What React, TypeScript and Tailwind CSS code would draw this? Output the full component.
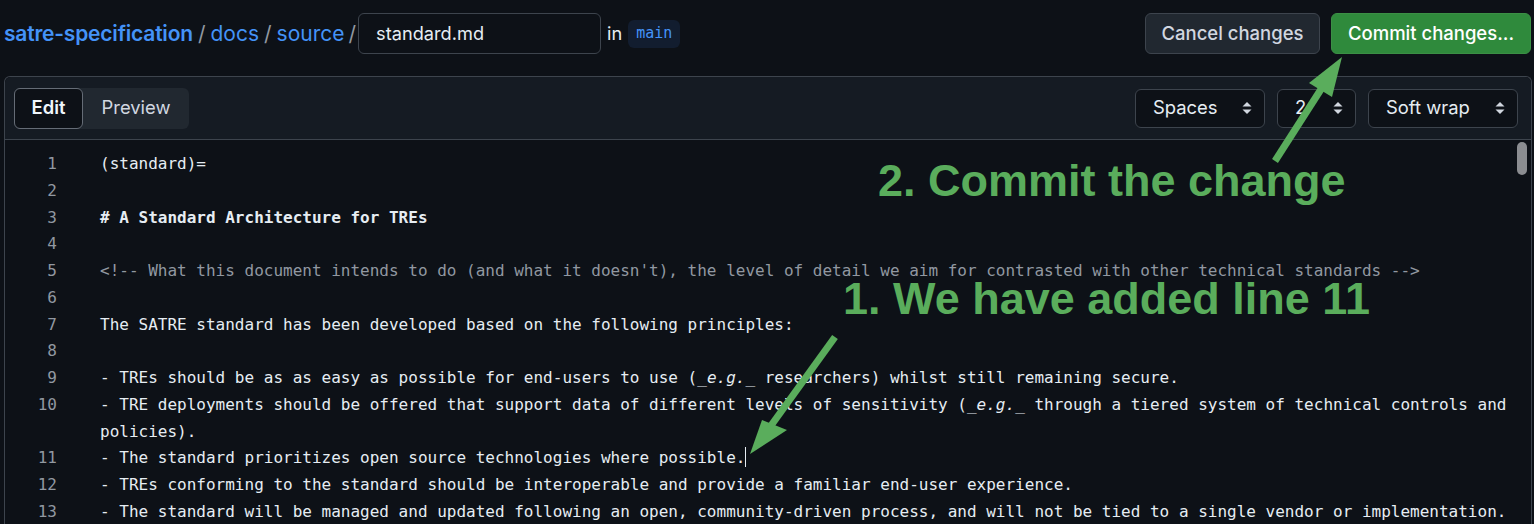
import React from "react";

type Seg = { t: string; i?: boolean };
type Line = { n: number; segs: Seg[]; bold?: boolean; muted?: boolean; cursor?: boolean };

const eg = (before: string, after: string): Seg[] => [
  { t: before + "_" },
  { t: "e.g.", i: true },
  { t: "_" + after },
];

const lines: Line[] = [
  { n: 1, segs: [{ t: "(standard)=" }] },
  { n: 2, segs: [] },
  { n: 3, segs: [{ t: "# A Standard Architecture for TREs" }], bold: true },
  { n: 4, segs: [] },
  {
    n: 5,
    segs: [
      {
        t: "<!-- What this document intends to do (and what it doesn't), the level of detail we aim for contrasted with other technical standards -->",
      },
    ],
    muted: true,
  },
  { n: 6, segs: [] },
  { n: 7, segs: [{ t: "The SATRE standard has been developed based on the following principles:" }] },
  { n: 8, segs: [] },
  {
    n: 9,
    segs: eg(
      "- TREs should be as as easy as possible for end-users to use (",
      " researchers) whilst still remaining secure."
    ),
  },
  {
    n: 10,
    segs: eg(
      "- TRE deployments should be offered that support data of different levels of sensitivity (",
      " through a tiered system of technical controls and policies)."
    ),
  },
  { n: 11, segs: [{ t: "- The standard prioritizes open source technologies where possible." }], cursor: true },
  {
    n: 12,
    segs: [{ t: "- TREs conforming to the standard should be interoperable and provide a familiar end-user experience." }],
  },
  {
    n: 13,
    segs: [
      {
        t: "- The standard will be managed and updated following an open, community-driven process, and will not be tied to a single vendor or implementation.",
      },
    ],
  },
  { n: 14, segs: [] },
];

function UpDown() {
  return (
    <svg width="10" height="14" viewBox="0 0 10 14" className="shrink-0">
      <path d="M5 1 L9.5 5.5 H0.5 Z" fill="#d1d7e0" />
      <path d="M5 13 L9.5 8.5 H0.5 Z" fill="#d1d7e0" />
    </svg>
  );
}

function Select({ label, w }: { label: string; w: string }) {
  return (
    <div
      className={`${w} h-[39px] flex items-center justify-between pl-[17px] pr-[12px] rounded-md border border-[#3d444d] bg-[#0d1117] text-[18.4px] text-[#e6edf3]`}
    >
      <span>{label}</span>
      <UpDown />
    </div>
  );
}

export default function App() {
  return (
    <div className="relative w-[1534px] h-[524px] overflow-hidden bg-[#0d1117] font-['Inter','Liberation_Sans',sans-serif]">
      {/* top bar */}
      <div className="flex items-center justify-between h-[67px] pl-[4px] pr-[3px]">
        <div className="flex items-center">
          <span className="text-[21px] font-semibold text-[#4493f8] tracking-[-0.2px]">satre-specification</span>
          <span className="text-[21px] text-[#9198a1] mx-[5px]">/</span>
          <span className="text-[21px] text-[#4493f8]">docs</span>
          <span className="text-[21px] text-[#9198a1] mx-[5px]">/</span>
          <span className="text-[21px] text-[#4493f8]">source</span>
          <span className="text-[21px] text-[#9198a1] ml-[4px] mr-[2px]">/</span>
          <div className="w-[243px] h-[41px] flex items-center pl-[17px] rounded-md border border-[#3d444d] bg-[#0d1117] text-[18.2px] text-[#e6edf3]">
            standard.md
          </div>
          <span className="ml-[6px] text-[18.2px] text-[#e6edf3]">in</span>
          <span className="ml-[6px] h-[28px] px-[8px] flex items-center rounded-md bg-[#121d2f] text-[#4493f8] text-[15px] font-['DejaVu_Sans_Mono',monospace]">
            main
          </span>
        </div>
        <div className="flex items-center gap-[11px]">
          <button className="h-[41px] w-[175px] rounded-md border border-[#3d444d] bg-[#212830] text-[#d1d7e0] text-[18.5px] font-medium">
            Cancel changes
          </button>
          <button className="h-[41px] w-[200px] rounded-md border border-[#3b8f45] bg-[#2f8a3c] text-white text-[18.5px] font-medium">
            Commit changes...
          </button>
        </div>
      </div>

      {/* editor */}
      <div className="mt-[9px] ml-[4px] mr-[2px] rounded-t-md border border-[#3d444d] border-b-0">
        <div className="h-[63px] flex items-center justify-between pl-[9px] pr-[13px] bg-[#151b23] border-b border-[#3d444d] rounded-t-md">
          <div className="flex h-[41px] rounded-md bg-[#212830]">
            <div className="w-[69px] flex items-center justify-center rounded-md border border-[#656c76] bg-[#0d1117] text-[18.4px] font-semibold text-[#f0f6fc]">
              Edit
            </div>
            <div className="w-[106px] flex items-center justify-center text-[18.4px] text-[#d1d7e0]">Preview</div>
          </div>
          <div className="flex items-center gap-[12px]">
            <Select label="Spaces" w="w-[130px]" />
            <Select label="2" w="w-[79px]" />
            <Select label="Soft wrap" w="w-[150px]" />
          </div>
        </div>

        <div className="relative pt-[11px] pr-[16px] font-['DejaVu_Sans_Mono','Liberation_Mono',monospace] text-[16px] leading-[26.77px]">
          {lines.map((l) => (
            <div key={l.n} className="flex">
              <div className="w-[52px] shrink-0 text-right text-[#9198a1]">{l.n}</div>
              <div
                className={`ml-[43px] flex-1 whitespace-pre-wrap break-words ${
                  l.muted ? "text-[#9198a1]" : "text-[#e6edf3]"
                } ${l.bold ? "font-bold" : ""}`}
              >
                {l.segs.map((s, i) =>
                  s.i ? (
                    <em key={i} className="italic">
                      {s.t}
                    </em>
                  ) : (
                    <span key={i}>{s.t}</span>
                  )
                )}
                {l.cursor && <span className="inline-block w-0 h-[20px] align-[-4px] border-l border-[#e6edf3]" />}
                {l.segs.length === 0 && " "}
              </div>
            </div>
          ))}
          {/* scrollbar */}
          <div className="absolute right-[4px] top-[2px] w-[10px] h-[33px] rounded-full bg-[#8b8d91]" />
        </div>
      </div>

      {/* annotations */}
      <svg className="absolute inset-0 pointer-events-none" width="1534" height="524" viewBox="0 0 1534 524">
        <line x1="1275" y1="161" x2="1325" y2="83" stroke="#5aad5c" strokeWidth="7" />
        <path d="M1342 57 L1309 83 L1332 97 Z" fill="#5aad5c" />
        <line x1="835" y1="337" x2="770" y2="427" stroke="#5aad5c" strokeWidth="7" />
        <path d="M750 454 L762 420 L787 430 Z" fill="#5aad5c" />
      </svg>
      <div className="absolute left-[878px] top-[158px] text-[45px] leading-[45px] font-bold text-[#5aad5c] font-['Liberation_Sans',sans-serif] whitespace-nowrap">
        2. Commit the change
      </div>
      <div className="absolute left-[843px] top-[276px] text-[45px] leading-[45px] font-bold text-[#5aad5c] font-['Liberation_Sans',sans-serif] whitespace-nowrap">
        1. We have added line 11
      </div>
    </div>
  );
}
